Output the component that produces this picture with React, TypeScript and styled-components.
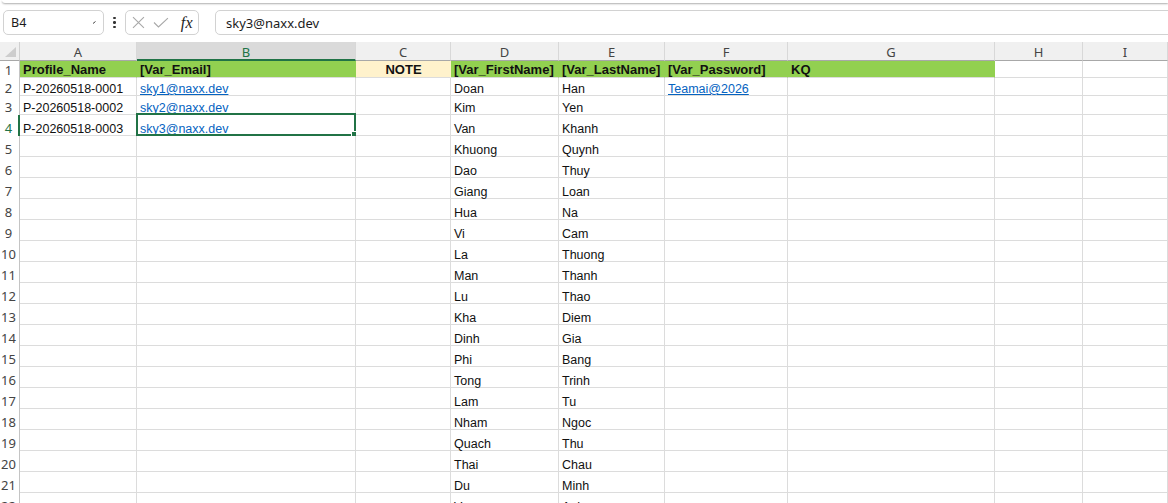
import React from 'react';
import styled, { createGlobalStyle, css } from 'styled-components';

const Global = createGlobalStyle`
  html, body { margin: 0; padding: 0; background: #ffffff; overflow: hidden; }
  #root { width: 1168px; height: 503px; overflow: hidden; }
`;

const GREEN = '#217346';
const GRID = '#dcdcdc';

const Page = styled.div`
  width: 1168px;
  height: 503px;
  overflow: hidden;
  display: flex;
  flex-direction: column;
  background: #ffffff;
  & > * {
    flex-shrink: 0;
  }
`;

const RibbonEdge = styled.div`
  height: 3px;
  margin-left: 2px;
  background: #ffffff;
  border-bottom-left-radius: 6px;
  box-shadow: 0 1px 2px rgba(0, 0, 0, 0.32);
`;

const FormulaRow = styled.div`
  height: 39px;
  display: flex;
  align-items: center;
  padding-left: 3px;
  font-family: 'Noto Sans', 'Open Sans', sans-serif;
  color: #1b1b1b;
`;

const Box = styled.div`
  box-sizing: border-box;
  height: 25px;
  border: 1px solid #d2d2d2;
  border-radius: 5px;
  background: #ffffff;
  display: flex;
  align-items: center;
`;

const NameBox = styled(Box)`
  width: 101px;
  padding: 0 6px 0 7px;
  justify-content: space-between;
  font-size: 12.5px;
`;

const Dots = styled.div`
  width: 21px;
  display: flex;
  flex-direction: column;
  align-items: center;
  gap: 2px;
  & > span {
    width: 2.4px;
    height: 2.4px;
    border-radius: 50%;
    background: #333;
  }
`;

const FxBox = styled(Box)`
  width: 74px;
  padding: 0 5px 0 6px;
  gap: 8px;
`;

const FxText = styled.span`
  font-family: 'Liberation Serif', 'DejaVu Serif', serif;
  font-style: italic;
  font-size: 16px;
  color: #222;
  margin-left: 4px;
  letter-spacing: 0.3px;
`;

const FormulaInput = styled(Box)`
  flex: 1;
  margin-left: 16px;
  margin-right: -10px;
  padding-left: 10px;
  font-size: 13px;
`;

const Sheet = styled.div`
  display: grid;
  grid-template-columns: 20px 117px 219px 95px 108px 106px 123px 207px 88px 1fr;
  grid-template-rows: 19px 17px 18px 19px 21px repeat(18, 21px);
  font-family: 'Liberation Sans', Arial, sans-serif;
`;

const Corner = styled.div`
  position: relative;
  box-sizing: border-box;
  background: #f0f0f0;
  border-bottom: 1px solid #a8a8a8;
  border-right: 1px solid #d0d0d0;
  &::after {
    content: '';
    position: absolute;
    right: 3px;
    bottom: 3px;
    width: 0;
    height: 0;
    border-style: solid;
    border-width: 0 0 10px 11px;
    border-color: transparent transparent #cdcdcd transparent;
  }
`;

const ColHead = styled.div<{ $active?: boolean }>`
  box-sizing: border-box;
  display: flex;
  align-items: center;
  justify-content: center;
  font-family: 'Noto Sans', 'Open Sans', sans-serif;
  font-size: 13px;
  color: #444;
  background: #f0f0f0;
  border-right: 1px solid #d8d8d8;
  border-bottom: 1px solid #a8a8a8;
  padding-top: 1px;
  ${(p) =>
    p.$active &&
    css`
      background: #dadada;
      color: ${GREEN};
      border-bottom: 2px solid ${GREEN};
      padding-top: 2px;
    `}
`;

const RowHead = styled.div<{ $active?: boolean }>`
  box-sizing: border-box;
  display: flex;
  align-items: flex-end;
  justify-content: center;
  padding: 0 2px 0 0;
  font-family: 'Noto Sans', 'Open Sans', sans-serif;
  font-size: 13px;
  line-height: 15px;
  color: #444;
  background: #ffffff;
  border-right: 1px solid #c4c4c4;
  ${(p) =>
    p.$active &&
    css`
      color: ${GREEN};
      border-right: 2px solid ${GREEN};
      padding-right: 1px;
    `}
`;

const Cell = styled.div<{ $fill?: string; $bold?: boolean; $center?: boolean }>`
  position: relative;
  box-sizing: border-box;
  display: flex;
  align-items: flex-end;
  justify-content: ${(p) => (p.$center ? 'center' : 'flex-start')};
  padding: 0 2px 0 3px;
  font-size: ${(p) => (p.$bold ? '13px' : '12.5px')};
  line-height: ${(p) => (p.$bold ? '14px' : '12px')};
  white-space: nowrap;
  color: #111;
  font-weight: ${(p) => (p.$bold ? 700 : 400)};
  background: ${(p) => p.$fill ?? '#ffffff'};
  border-right: 1px solid ${(p) => p.$fill ?? GRID};
  border-bottom: 1px solid ${GRID};
`;

const Selection = styled.div`
  position: absolute;
  left: -1px;
  top: -2px;
  right: -1px;
  bottom: -1px;
  border: 2px solid ${GREEN};
  pointer-events: none;
  &::after {
    content: '';
    position: absolute;
    right: -4px;
    bottom: -4px;
    width: 5px;
    height: 5px;
    background: ${GREEN};
    border: 1px solid #ffffff;
  }
`;

const Link = styled.span`
  color: #0563c1;
  text-decoration: underline;
  text-underline-offset: 1px;
`;

type Row = { a?: string; b?: string; d?: string; e?: string; f?: string };

const COLUMNS = ['A', 'B', 'C', 'D', 'E', 'F', 'G', 'H', 'I'];

const names: [string, string][] = [
  ['Doan', 'Han'],
  ['Kim', 'Yen'],
  ['Van', 'Khanh'],
  ['Khuong', 'Quynh'],
  ['Dao', 'Thuy'],
  ['Giang', 'Loan'],
  ['Hua', 'Na'],
  ['Vi', 'Cam'],
  ['La', 'Thuong'],
  ['Man', 'Thanh'],
  ['Lu', 'Thao'],
  ['Kha', 'Diem'],
  ['Dinh', 'Gia'],
  ['Phi', 'Bang'],
  ['Tong', 'Trinh'],
  ['Lam', 'Tu'],
  ['Nham', 'Ngoc'],
  ['Quach', 'Thu'],
  ['Thai', 'Chau'],
  ['Du', 'Minh'],
  ['Vu', 'Anh'],
];

const rows: Row[] = names.map(([d, e], i) => {
  const r: Row = { d, e };
  if (i < 3) {
    r.a = `P-20260518-000${i + 1}`;
    r.b = `sky${i + 1}@naxx.dev`;
  }
  if (i === 0) r.f = 'Teamai@2026';
  return r;
});

const HEAD_GREEN = '#92d050';
const HEAD_YELLOW = '#fff2cc';

export default function App() {
  return (
    <Page>
      <Global />
      <RibbonEdge />
      <FormulaRow>
        <NameBox>
          <span>B4</span>
          <svg width="5" height="5" viewBox="0 0 5 5">
            <path d="M1 3.5 L3.5 1.5" stroke="#444" strokeWidth="1" fill="none" />
          </svg>
        </NameBox>
        <Dots>
          <span />
          <span />
          <span />
        </Dots>
        <FxBox>
          <svg width="13" height="13" viewBox="0 0 13 13">
            <path d="M1 1 L12 12 M12 1 L1 12" stroke="#a8a8a8" strokeWidth="1.1" fill="none" />
          </svg>
          <svg width="16" height="11" viewBox="0 0 16 11">
            <path d="M1 5.5 L5.5 10 L15 1" stroke="#a8a8a8" strokeWidth="1.1" fill="none" />
          </svg>
          <FxText>fx</FxText>
        </FxBox>
        <FormulaInput>sky3@naxx.dev</FormulaInput>
      </FormulaRow>

      <Sheet>
        <Corner />
        {COLUMNS.map((c) => (
          <ColHead key={c} $active={c === 'B'}>
            {c}
          </ColHead>
        ))}

        <RowHead>1</RowHead>
        <Cell $fill={HEAD_GREEN} $bold>Profile_Name</Cell>
        <Cell $fill={HEAD_GREEN} $bold>[Var_Email]</Cell>
        <Cell $fill={HEAD_YELLOW} $bold $center>NOTE</Cell>
        <Cell $fill={HEAD_GREEN} $bold>[Var_FirstName]</Cell>
        <Cell $fill={HEAD_GREEN} $bold>[Var_LastName]</Cell>
        <Cell $fill={HEAD_GREEN} $bold>[Var_Password]</Cell>
        <Cell $fill={HEAD_GREEN} $bold>KQ</Cell>
        <Cell />
        <Cell />

        {rows.map((r, i) => {
          const n = i + 2;
          return (
            <React.Fragment key={n}>
              <RowHead $active={n === 4}>{n}</RowHead>
              <Cell>{r.a}</Cell>
              <Cell>
                {r.b && <Link>{r.b}</Link>}
                {n === 4 && <Selection />}
              </Cell>
              <Cell />
              <Cell>{r.d}</Cell>
              <Cell>{r.e}</Cell>
              <Cell>{r.f && <Link>{r.f}</Link>}</Cell>
              <Cell />
              <Cell />
              <Cell />
            </React.Fragment>
          );
        })}
      </Sheet>
    </Page>
  );
}
